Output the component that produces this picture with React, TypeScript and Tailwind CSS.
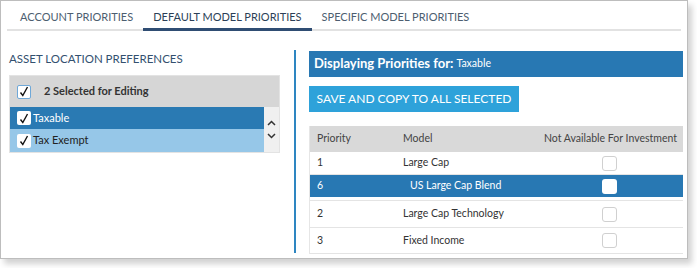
import React from "react";

const font = { fontFamily: "Lato, 'Liberation Sans', sans-serif" };

function Check({ boxed = false }: { boxed?: boolean }) {
  return (
    <span
      className={
        "flex h-[14px] w-[14px] items-center justify-center rounded-[2px] bg-white " +
        (boxed ? "border border-[#6fa8d8]" : "")
      }
    >
      <svg width="10" height="11" viewBox="0 0 10 11">
        <path d="M1.5 6.5 L3.8 9.5 L8.5 1" fill="none" stroke="#111" strokeWidth="1.4" />
      </svg>
    </span>
  );
}

function EmptyBox({ white = false }: { white?: boolean }) {
  return (
    <span
      className={
        "block h-[15px] w-[15px] rounded-[3px] " +
        (white ? "bg-white" : "border border-[#d0d0d0] bg-white")
      }
    />
  );
}

const rows = [
  { p: "1", m: "Large Cap", h: "h-[23px] border-b border-[#e4e4e4]" },
  { p: "6", m: "US Large Cap Blend", h: "h-[22px] bg-[#2878b3] text-white", sel: true },
  { p: "2", m: "Large Cap Technology", h: "mt-[3px] h-[28px] border-y border-[#e4e4e4]" },
  { p: "3", m: "Fixed Income", h: "h-[26px] border-b border-[#e4e4e4]" },
];

export default function App() {
  return (
    <div className="h-[268px] w-[697px] bg-white" style={font}>
      <div className="h-[259px] w-[688px] border border-[#bdbdbd] bg-white shadow-[4px_5px_6px_rgba(0,0,0,0.18)]">
        {/* tabs */}
        <div className="mx-[6px] flex h-[30px] border-b-2 border-[#e2e2e2] pl-[3px] text-[11px] text-[#4d5e70]">
          <div className="flex items-center px-[10px] pt-[4px]">ACCOUNT PRIORITIES</div>
          <div className="-mb-[2px] flex items-center border-b-[3px] border-[#2f4d73] px-[10px] pt-[5px] text-[#2c3f57]">
            DEFAULT MODEL PRIORITIES
          </div>
          <div className="flex items-center px-[10px] pt-[4px]">SPECIFIC MODEL PRIORITIES</div>
        </div>

        <div className="flex">
          {/* left */}
          <div className="w-[293px] pl-[8px] pt-[20px]">
            <div className="text-[11.5px] leading-[16px] text-[#33506f]">ASSET LOCATION PREFERENCES</div>
            <div className="mt-[8px] w-[271px] border border-[#e3e3e3]">
              <div className="flex h-[31px] items-center bg-[#d6d6d6] pl-[7px]">
                <Check boxed />
                <span className="ml-[13px] text-[11px] font-bold text-[#333]">2 Selected for Editing</span>
              </div>
              <div className="flex text-[11px]">
                <div className="flex-1">
                  <div className="flex h-[22px] items-center bg-[#2a7ab3] pl-[7px] text-white">
                    <Check />
                    <span className="ml-[2px]">Taxable</span>
                  </div>
                  <div className="flex h-[23px] items-center bg-[#96c7e8] pl-[7px] text-[#222]">
                    <Check />
                    <span className="ml-[2px]">Tax Exempt</span>
                  </div>
                </div>
                <div className="flex w-[15px] flex-col items-center justify-center gap-[7px] bg-[#f0f0f0]">
                  <svg width="9" height="6" viewBox="0 0 9 6">
                    <path d="M1 5 L4.5 1.5 L8 5" fill="none" stroke="#333" strokeWidth="1.5" />
                  </svg>
                  <svg width="9" height="6" viewBox="0 0 9 6">
                    <path d="M1 1 L4.5 4.5 L8 1" fill="none" stroke="#333" strokeWidth="1.5" />
                  </svg>
                </div>
              </div>
            </div>
          </div>

          {/* divider */}
          <div className="mt-[19px] h-[203px] w-[2px] bg-[#2e86c1]" />

          {/* right */}
          <div className="ml-[13px] w-[374px] pt-[20px]">
            <div className="flex h-[26px] items-center bg-[#2878b3] pl-[5px] text-white">
              <span className="text-[13px] font-bold">Displaying Priorities for:</span>
              <span className="ml-[3px] text-[10.5px]">Taxable</span>
            </div>
            <div className="mt-[9px] flex h-[26px] w-[210px] items-center justify-center whitespace-nowrap bg-[#2ea2da] text-[12px] text-white">
              SAVE AND COPY TO ALL SELECTED
            </div>
            <div className="mt-[14px] border-l border-[#e6e6e6] text-[10.5px] text-[#333]">
              <div className="flex h-[26px] items-center bg-[#d9d9d9] text-[#444]">
                <div className="w-[93px] pl-[7px]">Priority</div>
                <div className="flex-1">Model</div>
                <div className="pr-[6px]">Not Available For Investment</div>
              </div>
              {rows.map((r) => (
                <div key={r.p} className={"flex items-center " + r.h}>
                  <div className="w-[93px] pl-[7px]">{r.p}</div>
                  <div className={"flex-1 " + (r.sel ? "pl-[7px]" : "")}>{r.m}</div>
                  <div className="mr-[66px]">
                    <EmptyBox white={r.sel} />
                  </div>
                </div>
              ))}
            </div>
          </div>
        </div>
      </div>
    </div>
  );
}
